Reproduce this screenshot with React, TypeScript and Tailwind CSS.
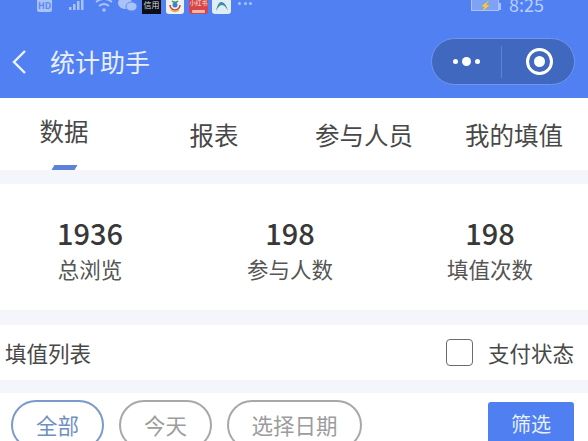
const font = { fontFamily: '"Noto Sans CJK SC", "Noto Sans", sans-serif' };

function StatusBar() {
  return (
    <div className="relative h-[14px] overflow-hidden">
      <div className="flex h-[14px] items-end pl-[37px] text-[#a9c2f8]">
        {/* HD */}
        <div className="mb-[2px] mr-[8px] flex h-[14px] w-[15px] items-center justify-center rounded-[2px] bg-[#a9c2f8] text-[9px] font-bold leading-none text-[#5c88f0]">
          HD
        </div>
        {/* signal */}
        <svg width="27" height="16" viewBox="0 0 27 16" className="mb-[1px] mr-[8px] shrink-0">
          <g fill="#a9c2f8">
            <rect x="9" y="10" width="2.5" height="3" />
            <rect x="13" y="7" width="2.5" height="6" />
            <rect x="17" y="4" width="2.5" height="9" />
            <rect x="21" y="1" width="2.5" height="12" />
            <rect x="1" y="1" width="5" height="2" />
          </g>
        </svg>
        {/* wifi */}
        <svg width="18" height="14" viewBox="0 0 18 14" className="mb-[1px] mr-[5px] shrink-0">
          <g fill="none" stroke="#a9c2f8" strokeWidth="1.8">
            <path d="M1 3q8-6 16 0" />
            <path d="M4 7q5-4 10 0" />
          </g>
          <circle cx="9" cy="11" r="1.8" fill="#a9c2f8" />
        </svg>
        {/* wechat */}
        <svg width="19" height="14" viewBox="0 0 19 14" className="mb-[2px] mr-[5px] shrink-0">
          <ellipse cx="7" cy="5" rx="7" ry="6" fill="#a9c2f8" />
          <ellipse cx="13.5" cy="8.5" rx="5.5" ry="4.5" fill="#a9c2f8" stroke="#5c88f0" />
        </svg>
        <div className="mr-[5px] flex h-[14px] w-[19px] items-start justify-center overflow-hidden bg-[#0b0d18] text-[8px] leading-[10px] text-[#d8d8d8]">
          信用
        </div>
        <div className="mr-[5px] flex h-[14px] w-[18px] justify-center rounded-b-[3px] bg-[#eef1f4]">
          <svg width="14" height="14" viewBox="0 0 14 14">
            <path d="M2 5a5 5 0 0 0 10 0" fill="none" stroke="#d33a2c" strokeWidth="1.5" />
            <path d="M4 1a4 4 0 0 0 6 0" fill="none" stroke="#3a9a4c" strokeWidth="1.5" />
            <circle cx="7" cy="5" r="2.5" fill="#3d7fd0" />
            <path d="M3 10q4 3 8 0" fill="none" stroke="#e2b33a" strokeWidth="1.5" />
          </svg>
        </div>
        <div className="mr-[4px] flex h-[14px] w-[19px] flex-col items-center justify-between overflow-hidden rounded-b-[3px] bg-[#d9434c] leading-none text-[#f7e3d8]">
          <span className="whitespace-nowrap text-[6px]">小红书</span>
          <span className="mb-[1px] h-[3px] w-[13px] rounded-[1px] bg-[#f0b9a0]" />
        </div>
        <div className="mr-[7px] flex h-[14px] w-[19px] justify-center rounded-b-[3px] bg-[#dfeef4]">
          <svg width="16" height="14" viewBox="0 0 16 14">
            <path d="M2 11q2-10 6-9t6 9q-3-6-6-6t-6 6" fill="#3f8ea8" />
          </svg>
        </div>
        <div className="mb-[9px] flex gap-[2.5px]">
          <span className="h-[3px] w-[3px] rounded-full bg-[#a9c2f8]" />
          <span className="h-[3px] w-[3px] rounded-full bg-[#a9c2f8]" />
          <span className="h-[3px] w-[3px] rounded-full bg-[#a9c2f8]" />
        </div>
        <div className="mb-[3px] ml-auto flex items-end pr-[44px]">
          <div className="flex h-[11px] w-[28px] items-center justify-center rounded-b-[1px] border border-t-0 border-[#a9c2f8] bg-[#7fa2f5]">
            <span className="text-[9px] leading-none text-[#d4e0fb]">⚡</span>
          </div>
          <span className="mb-[1px] mr-[8px] h-[7px] w-[2px] bg-[#a9c2f8]" />
          <span className="h-[11px] text-[18px] leading-[9px] text-[#b9cffa]">8:25</span>
        </div>
      </div>
    </div>
  );
}

function NavBar() {
  return (
    <div className="flex h-[84px] items-center pr-[13px] pt-[11px]">
      <svg width="16" height="26" viewBox="0 0 16 26" className="ml-[11px] shrink-0">
        <path d="M14 2 3 13l11 11" fill="none" stroke="#eef3fe" strokeWidth="2.4" />
      </svg>
      <span className="ml-[23px] text-[25px] leading-none text-[#e9effd]">统计助手</span>
      <div className="ml-auto flex h-[47px] w-[144px] items-center rounded-full border border-[#6f95ee] bg-[#4068bf]">
        <div className="flex flex-1 items-center justify-center gap-[4px]">
          <span className="h-[5px] w-[5px] rounded-full bg-white" />
          <span className="h-[9px] w-[9px] rounded-full bg-white" />
          <span className="h-[5px] w-[5px] rounded-full bg-white" />
        </div>
        <div className="h-[32px] w-px bg-[#5c82d8]" />
        <div className="flex flex-1 items-center justify-center pl-[4px]">
          <div className="flex h-[27px] w-[27px] items-center justify-center rounded-full border-[3px] border-white">
            <span className="h-[11px] w-[11px] rounded-full bg-white" />
          </div>
        </div>
      </div>
    </div>
  );
}

function Tabs() {
  return (
    <div className="relative grid h-[72px] w-[600px] -translate-x-[11px] grid-cols-4 bg-white text-[#484848]">
      <div className="flex flex-col items-center pt-[15px]">
        <span className="text-[24.5px] leading-[36px]">数据</span>
        <span className="absolute bottom-0 h-[5px] w-[23px] -skew-x-[30deg] bg-[#5b82d8]" />
      </div>
      <div className="flex justify-center pt-[19px] text-[24.5px] leading-[36px]">报表</div>
      <div className="flex justify-center pt-[19px] text-[24.5px] leading-[36px]">参与人员</div>
      <div className="flex justify-center pt-[19px] text-[24.5px] leading-[36px]">我的填值</div>
    </div>
  );
}

function Stat({ value, label }: { value: string; label: string }) {
  return (
    <div className="flex flex-col items-center">
      <span className="text-[29px] font-medium leading-[36px] text-[#383838]">{value}</span>
      <span className="mt-[4px] text-[21.5px] leading-[30px] text-[#555555]">{label}</span>
    </div>
  );
}

function Pill({ label, active, wide }: { label: string; active?: boolean; wide?: boolean }) {
  return (
    <div
      className={`flex h-[50px] shrink-0 items-center justify-center whitespace-nowrap rounded-[25px] border-2 text-[21.5px] leading-none ${
        wide ? 'w-[135px]' : 'w-[93px]'
      } ${active ? 'border-[#7c9ac8] text-[#6f8fc0]' : 'border-[#a8a8a8] text-[#9c9c9c]'}`}
    >
      {label}
    </div>
  );
}

export default function App() {
  return (
    <div className="h-[441px] w-[588px] overflow-hidden bg-[#f4f6fb]" style={font}>
      <div className="bg-[#5180f2]">
        <StatusBar />
        <NavBar />
      </div>

      <Tabs />

      <div className="mt-[14px] h-[126px] bg-white">
        <div className="grid w-[600px] -translate-x-[10px] grid-cols-3 pt-[30px]">
          <Stat value="1936" label="总浏览" />
          <Stat value="198" label="参与人数" />
          <Stat value="198" label="填值次数" />
        </div>
      </div>

      <div className="mt-[15px] flex h-[55px] items-center bg-white pl-[5px] pr-[14px]">
        <span className="text-[21.5px] leading-none text-[#484848]">填值列表</span>
        <span className="ml-auto h-[27px] w-[27px] rounded-[4px] border-[1.5px] border-[#6b6b6b] bg-white" />
        <span className="ml-[15px] text-[21.5px] leading-none text-[#484848]">支付状态</span>
      </div>

      <div className="mt-[13px] flex h-[60px] items-start bg-white pl-[11px] pr-[14px] pt-[7px]">
        <div className="flex gap-[15px]">
          <Pill label="全部" active />
          <Pill label="今天" />
          <Pill label="选择日期" wide />
        </div>
        <div className="ml-auto mt-[2px] flex h-[44px] w-[86px] items-center justify-center rounded-[3px] bg-[#4f7ff0] text-[20px] leading-none text-[#e9effd]">
          筛选
        </div>
      </div>
    </div>
  );
}
